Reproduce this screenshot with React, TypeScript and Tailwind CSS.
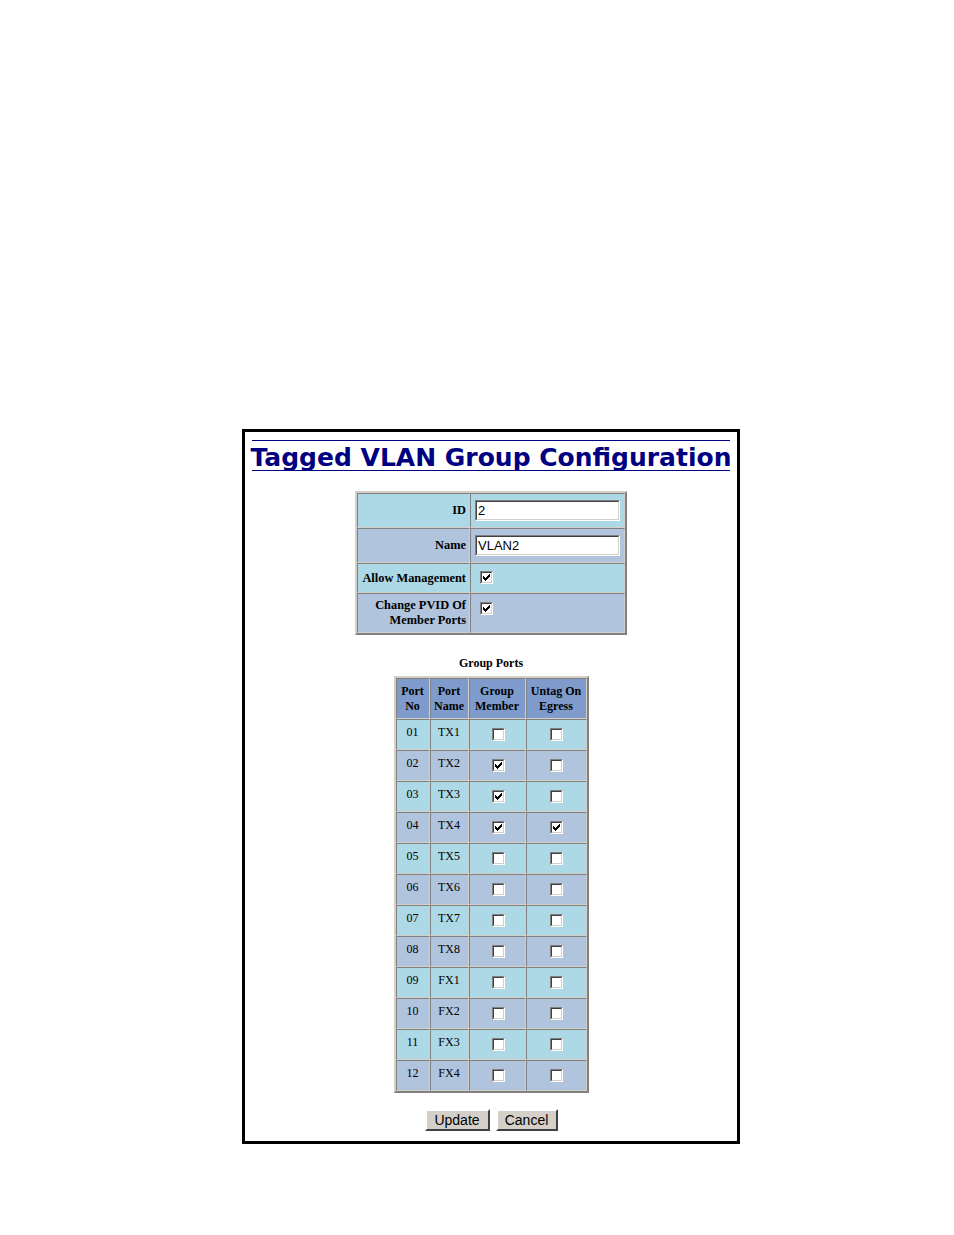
import React from "react";

const serif = "font-['Liberation_Serif','Times_New_Roman',serif]";
const sans = "font-['Liberation_Sans',Arial,sans-serif]";

const ports = [
  { no: "01", name: "TX1", member: false, untag: false },
  { no: "02", name: "TX2", member: true, untag: false },
  { no: "03", name: "TX3", member: true, untag: false },
  { no: "04", name: "TX4", member: true, untag: true },
  { no: "05", name: "TX5", member: false, untag: false },
  { no: "06", name: "TX6", member: false, untag: false },
  { no: "07", name: "TX7", member: false, untag: false },
  { no: "08", name: "TX8", member: false, untag: false },
  { no: "09", name: "FX1", member: false, untag: false },
  { no: "10", name: "FX2", member: false, untag: false },
  { no: "11", name: "FX3", member: false, untag: false },
  { no: "12", name: "FX4", member: false, untag: false },
];

// classic windows tick, 7x7 pixels
const tick = [
  "......#",
  ".....##",
  "#...###",
  "##.###.",
  "#####..",
  ".###...",
  "..#....",
];

function Checkbox({ checked }: { checked: boolean }) {
  return (
    <span className="inline-block align-top w-[13px] h-[13px] border border-t-[#808080] border-l-[#808080] border-b-white border-r-white">
      <span className="block w-[11px] h-[11px] bg-white border border-t-[#404040] border-l-[#404040] border-b-[#d4d0c8] border-r-[#d4d0c8] p-px">
        {checked && (
          <svg width="7" height="7" viewBox="0 0 7 7" shapeRendering="crispEdges" className="block">
            {tick.map((row, y) =>
              row.split("").map((c, x) =>
                c === "#" ? <rect key={`${x}-${y}`} x={x} y={y} width="1" height="1" fill="#000" /> : null,
              ),
            )}
          </svg>
        )}
      </span>
    </span>
  );
}

function TextBox({ value }: { value: string }) {
  return (
    <div className="w-[145px] h-[21px] border border-t-[#808080] border-l-[#808080] border-b-white border-r-white">
      <div className={`h-full bg-white border border-t-[#404040] border-l-[#404040] border-b-[#d4d0c8] border-r-[#d4d0c8] pl-[1px] text-[13px] leading-[17px] font-normal text-black ${sans}`}>
        {value}
      </div>
    </div>
  );
}

const cell = "border border-t-[#808080] border-l-[#808080] border-b-[#d4d0c8] border-r-[#d4d0c8]";
const tableBorder = "border-2 border-t-[#d4d0c8] border-l-[#d4d0c8] border-b-[#808080] border-r-[#808080]";

export default function App() {
  return (
    <div className="min-h-[1235px] bg-white pt-[429px] pl-[242px]">
      <div className="w-[498px] border-[3px] border-black px-[7px] pt-[8px] pb-[10px]">
        <div className="h-[31px] border-t border-b border-[#000080] flex items-end justify-center overflow-visible">
          <h1 className="text-[25px] leading-[30px] font-bold text-[#000080] whitespace-nowrap font-['DejaVu_Sans',Verdana,sans-serif] -mb-[3px]">
            Tagged VLAN Group Configuration
          </h1>
        </div>

        <table className={`mx-auto mt-[20px] border-separate border-spacing-0 ${tableBorder} ${serif} text-[12.4px] font-bold text-black`}>
          <tbody>
            <tr className="bg-[#add8e6] h-[35px]">
              <td className={`${cell} w-[113px] text-right pr-[3px]`}>ID</td>
              <td className={`${cell} w-[155px] pl-[4px]`}><TextBox value="2" /></td>
            </tr>
            <tr className="bg-[#b0c4de] h-[35px]">
              <td className={`${cell} text-right pr-[3px]`}>Name</td>
              <td className={`${cell} pl-[4px]`}><TextBox value="VLAN2" /></td>
            </tr>
            <tr className="bg-[#add8e6] h-[30px]">
              <td className={`${cell} text-right pr-[3px] whitespace-nowrap`}>Allow Management</td>
              <td className={`${cell} pl-[9px] align-top pt-[7px] leading-none`}><Checkbox checked /></td>
            </tr>
            <tr className="bg-[#b0c4de] h-[40px]">
              <td className={`${cell} text-right pr-[3px] leading-[15px]`}>
                Change PVID Of
                <br />
                Member Ports
              </td>
              <td className={`${cell} pl-[9px] align-top pt-[8px] leading-none`}><Checkbox checked /></td>
            </tr>
          </tbody>
        </table>

        <div className={`mt-[21px] text-center text-[12px] leading-[14px] font-bold text-black ${serif}`}>
          Group Ports
        </div>

        <table className={`mx-auto mt-[6px] border-separate border-spacing-0 ${tableBorder} ${serif} text-[12px] text-black`}>
          <thead>
            <tr className="bg-[#7f9bcb] h-[41px] font-bold leading-[15px]">
              <th className={`${cell} w-[34px] font-bold`}>Port<br />No</th>
              <th className={`${cell} w-[39px] font-bold`}>Port<br />Name</th>
              <th className={`${cell} w-[57px] font-bold`}>Group<br />Member</th>
              <th className={`${cell} w-[61px] font-bold`}>Untag On<br />Egress</th>
            </tr>
          </thead>
          <tbody>
            {ports.map((p, i) => (
              <tr key={p.no} className={`${i % 2 === 0 ? "bg-[#add8e6]" : "bg-[#b0c4de]"} h-[31px]`}>
                <td className={`${cell} text-center pb-[5px]`}>{p.no}</td>
                <td className={`${cell} text-center pb-[5px]`}>{p.name}</td>
                <td className={`${cell} text-center leading-none pl-[2px]`}><Checkbox checked={p.member} /></td>
                <td className={`${cell} text-center leading-none`}><Checkbox checked={p.untag} /></td>
              </tr>
            ))}
          </tbody>
        </table>

        <div className={`mt-[16px] flex justify-center gap-[6px] ${sans}`}>
          <button className="w-[65px] h-[22px] bg-[#d4d0c8] text-[14px] leading-[16px] text-black border-2 border-t-white border-l-white border-b-[#404040] border-r-[#404040]">
            Update
          </button>
          <button className="w-[62px] h-[22px] bg-[#d4d0c8] text-[14px] leading-[16px] text-black border-2 border-t-white border-l-white border-b-[#404040] border-r-[#404040]">
            Cancel
          </button>
        </div>
      </div>
    </div>
  );
}
